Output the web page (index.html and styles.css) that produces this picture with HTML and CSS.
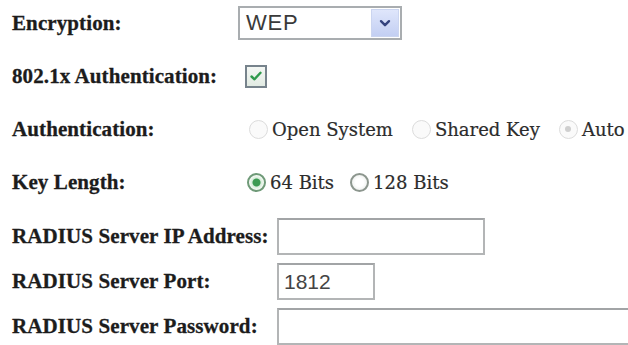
FILE: index.html
```html
<!DOCTYPE html>
<html>
<head>
<meta charset="utf-8">
<link rel="stylesheet" href="styles.css">
</head>
<body>
<div class="page">
  <div class="grid top">
    <div class="label">Encryption:</div>
    <div class="value">
      <div class="select">
        <span class="select-text">WEP</span>
        <span class="select-btn">
          <svg width="12" height="9" viewBox="0 0 12 9"><path d="M2 2.2 L6 6.2 L10 2.2" fill="none" stroke="#34437e" stroke-width="2.4" stroke-linecap="round" stroke-linejoin="round"/></svg>
        </span>
      </div>
    </div>

    <div class="label">802.1x Authentication:</div>
    <div class="value">
      <span class="checkbox">
        <svg width="14" height="12" viewBox="0 0 14 12"><path d="M2.5 6.5 L5.5 9.3 L11.5 2.8" fill="none" stroke="#2f9a4c" stroke-width="2.4" stroke-linecap="round" stroke-linejoin="round"/></svg>
      </span>
    </div>

    <div class="label">Authentication:</div>
    <div class="value options auth">
      <span class="opt"><span class="radio disabled"></span><span class="opt-text">Open System</span></span>
      <span class="opt"><span class="radio disabled"></span><span class="opt-text">Shared Key</span></span>
      <span class="opt"><span class="radio disabled checked"></span><span class="opt-text">Auto</span></span>
    </div>

    <div class="label">Key Length:</div>
    <div class="value options keylen">
      <span class="opt"><span class="radio on"></span><span class="opt-text">64 Bits</span></span>
      <span class="opt"><span class="radio off"></span><span class="opt-text">128 Bits</span></span>
    </div>
  </div>

  <div class="grid bottom">
    <div class="label">RADIUS Server IP Address:</div>
    <div class="value"><span class="field ip"></span></div>

    <div class="label">RADIUS Server Port:</div>
    <div class="value"><span class="field port">1812</span></div>

    <div class="label">RADIUS Server Password:</div>
    <div class="value"><span class="field pass"></span></div>
  </div>
</div>
</body>
</html>
```

FILE: styles.css
```css
html, body {
  margin: 0;
  padding: 0;
  background: #ffffff;
  overflow: hidden;
}

.page {
  padding-left: 12px;
  width: 616px;
}

.grid {
  display: grid;
  align-items: center;
}

.top {
  grid-template-columns: 227px 1fr;
  grid-auto-rows: 40px;
  row-gap: 13px;
  padding-top: 3px;
}

.bottom {
  grid-template-columns: 265px 1fr;
  grid-auto-rows: 37px;
  row-gap: 8px;
  margin-top: 16px;
}

.label {
  font-family: "Liberation Serif", "Times New Roman", serif;
  font-weight: bold;
  font-size: 21px;
  color: #1c1c1c;
  white-space: nowrap;
  letter-spacing: 0.1px;
  -webkit-text-stroke: 0.3px #1c1c1c;
}

.value {
  display: flex;
  align-items: center;
  height: 100%;
}

/* select */
.select {
  box-sizing: border-box;
  width: 164px;
  height: 34px;
  margin-left: -1px;
  border: 2px solid #a9adb0;
  display: flex;
  align-items: stretch;
  background: #fff;
}

.select-text {
  flex: 1;
  font-family: "Liberation Sans", Arial, sans-serif;
  font-size: 22px;
  letter-spacing: 0.8px;
  color: #3a3a3a;
  padding-left: 6px;
  display: flex;
  align-items: center;
}

.select-btn {
  width: 26px;
  margin: 1px;
  background: linear-gradient(#dfe6fb, #c3cff3);
  border: 1px solid #cbd5f0;
  display: flex;
  align-items: center;
  justify-content: center;
}

/* checkbox */
.checkbox {
  box-sizing: border-box;
  width: 22px;
  height: 23px;
  margin-left: 6px;
  border: 2px solid #77838c;
  background: linear-gradient(#f4f7f4, #e2ebe3);
  display: flex;
  align-items: center;
  justify-content: center;
}

/* radio options */
.options {
  font-family: "DejaVu Serif", "Liberation Serif", serif;
  font-size: 18px;
  color: #2c2c2c;
  white-space: nowrap;
  -webkit-text-stroke: 0.2px #2c2c2c;
}

.opt {
  display: flex;
  align-items: center;
}

.auth .opt + .opt {
  margin-left: 19px;
}

.keylen .opt + .opt {
  margin-left: 16px;
}

.auth {
  padding-left: 10px;
}

.keylen {
  padding-left: 8px;
}

.radio {
  box-sizing: border-box;
  width: 19px;
  height: 19px;
  border-radius: 50%;
  margin-right: 4px;
  position: relative;
  flex: none;
}

.radio.disabled {
  border: 1.5px solid #dcdcdc;
  background: #fafafa;
}

.radio.disabled.checked::after {
  content: "";
  position: absolute;
  left: 50%;
  top: 50%;
  width: 6px;
  height: 6px;
  margin: -3px 0 0 -3px;
  border-radius: 50%;
  background: #cfcfcf;
}

.radio.on {
  border: 2px solid #6f9a78;
  background: radial-gradient(circle, #3c9a52 0 3.5px, #d6ecd9 4.5px, #f4faf4 7px);
}

.radio.off {
  border: 2px solid #8c968e;
  background: radial-gradient(circle, #ffffff 0 4px, #eef0ee 8px);
}

/* text fields */
.field {
  box-sizing: border-box;
  height: 37px;
  border: 2px solid #b3b5b6;
  border-top-color: #a2a4a6;
  background: #fff;
  font-family: "Liberation Sans", Arial, sans-serif;
  font-size: 21px;
  color: #444;
  display: flex;
  align-items: center;
  padding-left: 5px;
}

.field.ip {
  width: 208px;
}

.field.port {
  width: 98px;
}

.field.pass {
  width: 360px;
  flex: none;
}
```
